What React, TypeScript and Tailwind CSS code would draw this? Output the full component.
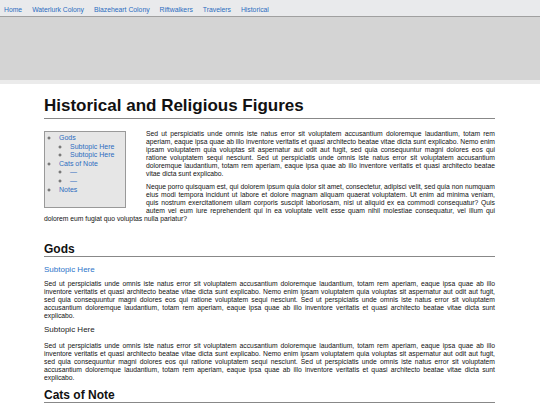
const navLinks = ["Home", "Waterlurk Colony", "Blazeheart Colony", "Riftwalkers", "Travelers", "Historical"];

const sedUt =
  "Sed ut perspiciatis unde omnis iste natus error sit voluptatem accusantium doloremque laudantium, totam rem aperiam, eaque ipsa quae ab illo inventore veritatis et quasi architecto beatae vitae dicta sunt explicabo. Nemo enim ipsam voluptatem quia voluptas sit aspernatur aut odit aut fugit, sed quia consequuntur magni dolores eos qui ratione voluptatem sequi nesciunt. Sed ut perspiciatis unde omnis iste natus error sit voluptatem accusantium doloremque laudantium, totam rem aperiam, eaque ipsa quae ab illo inventore veritatis et quasi architecto beatae vitae dicta sunt explicabo.";

const neque =
  "Neque porro quisquam est, qui dolorem ipsum quia dolor sit amet, consectetur, adipisci velit, sed quia non numquam eius modi tempora incidunt ut labore et dolore magnam aliquam quaerat voluptatem. Ut enim ad minima veniam, quis nostrum exercitationem ullam corporis suscipit laboriosam, nisi ut aliquid ex ea commodi consequatur? Quis autem vel eum iure reprehenderit qui in ea voluptate velit esse quam nihil molestiae consequatur, vel illum qui dolorem eum fugiat quo voluptas nulla pariatur?";

function Para({ children, className = "" }: { children: string; className?: string }) {
  return <p className={`text-[6.78px] leading-[8px] text-justify text-[#111] ${className}`}>{children}</p>;
}

export default function App() {
  return (
    <div className="min-h-screen bg-white font-['Liberation_Sans',Arial,sans-serif]">
      <nav className="flex h-[17px] items-center gap-[10px] border-b border-[#a0a0a0] bg-[#e9eaec] pl-[4px] pt-[4px] text-[6.8px] text-[#2c6cc0]">
        {navLinks.map((l) => (
          <a key={l} href="#">
            {l}
          </a>
        ))}
      </nav>
      <div className="h-[63px] bg-[#d4d4d4]" />
      <div className="h-[4px] bg-[#ebebeb]" />

      <main className="pl-[44px] pr-[45px]">
        <h1 className="mt-[12px] border-b border-[#888] pb-[2px] text-[17px] font-bold leading-[20px] text-[#111]">
          Historical and Religious Figures
        </h1>

        <div className="flow-root">
          <div className="float-left mr-[20px] mt-[12px] h-[77px] w-[82px] border border-[#999] bg-[#e6e6e6] pt-[2px] text-[7px] leading-[8.6px] text-[#2c6cc0]">
            <ul className="list-[circle] pl-[14px] marker:text-[#555]">
              <li>Gods</li>
              <li className="list-none">
                <ul className="list-[circle] pl-[11px]">
                  <li>Subtopic Here</li>
                  <li>Subtopic Here</li>
                </ul>
              </li>
              <li>Cats of Note</li>
              <li className="list-none">
                <ul className="list-[circle] pl-[11px]">
                  <li>—</li>
                  <li>—</li>
                </ul>
              </li>
              <li>Notes</li>
            </ul>
          </div>
          <Para className="mt-[11px]">{sedUt}</Para>
          <Para className="mt-[5px]">{neque}</Para>
        </div>

        <h2 className="mt-[19px] border-b border-[#888] text-[12px] font-bold leading-[14px] text-[#111]">Gods</h2>
        <h3 className="mt-[8px] text-[8px] leading-[10px] text-[#2c74c9]">Subtopic Here</h3>
        <Para className="mt-[5px]">{sedUt}</Para>
        <h4 className="mt-[5px] text-[8px] leading-[10px] text-[#222]">Subtopic Here</h4>
        <Para className="mt-[7px]">{sedUt}</Para>

        <h2 className="mt-[6px] border-b border-[#888] text-[12px] font-bold leading-[14px] text-[#111]">Cats of Note</h2>
      </main>
    </div>
  );
}
